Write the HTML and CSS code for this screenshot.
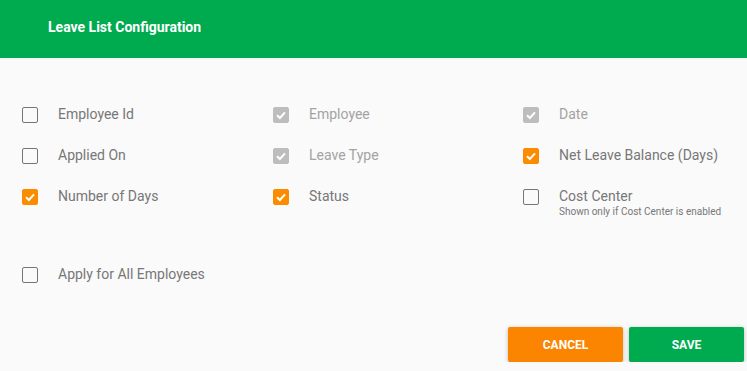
FILE: index.html
```html
<!DOCTYPE html>
<html lang="en">
<head>
    <meta charset="UTF-8">
    <title>Leave List Configuration</title>
    <link rel="stylesheet" href="styles.css">
</head>
<body>
    <!-- Header -->
    <div class="header">
        <h1>Leave List Configuration</h1>
    </div>

    <!-- Column options -->
    <div class="content">
        <div class="options">
            <label class="option">
                <span class="box"></span>
                <span class="label">Employee Id</span>
            </label>
            <label class="option disabled">
                <span class="box checked"><svg viewBox="0 0 16 16"><path d="M4 8.3 L6.9 11 L12 5.4"/></svg></span>
                <span class="label">Employee</span>
            </label>
            <label class="option disabled">
                <span class="box checked"><svg viewBox="0 0 16 16"><path d="M4 8.3 L6.9 11 L12 5.4"/></svg></span>
                <span class="label">Date</span>
            </label>

            <label class="option">
                <span class="box"></span>
                <span class="label">Applied On</span>
            </label>
            <label class="option disabled">
                <span class="box checked"><svg viewBox="0 0 16 16"><path d="M4 8.3 L6.9 11 L12 5.4"/></svg></span>
                <span class="label">Leave Type</span>
            </label>
            <label class="option">
                <span class="box checked"><svg viewBox="0 0 16 16"><path d="M4 8.3 L6.9 11 L12 5.4"/></svg></span>
                <span class="label">Net Leave Balance (Days)</span>
            </label>

            <label class="option">
                <span class="box checked"><svg viewBox="0 0 16 16"><path d="M4 8.3 L6.9 11 L12 5.4"/></svg></span>
                <span class="label">Number of Days</span>
            </label>
            <label class="option">
                <span class="box checked"><svg viewBox="0 0 16 16"><path d="M4 8.3 L6.9 11 L12 5.4"/></svg></span>
                <span class="label">Status</span>
            </label>
            <label class="option">
                <span class="box"></span>
                <span class="label">Cost Center
                    <small>Shown only if Cost Center is enabled</small>
                </span>
            </label>
        </div>

        <label class="option apply-all">
            <span class="box"></span>
            <span class="label">Apply for All Employees</span>
        </label>
    </div>

    <!-- Actions -->
    <div class="actions">
        <button class="btn cancel-btn">Cancel</button>
        <button class="btn save-btn">Save</button>
    </div>
</body>
</html>
```

FILE: styles.css
```css
body {
    margin: 0;
    padding: 0;
    background-color: #fafafa;
    font-family: Roboto, 'Liberation Sans', sans-serif;
    color: #757575;
}
/* Header */
.header {
    height: 58px;
    background-color: #00ab4f;
    display: flex;
    align-items: center;
    padding-left: 48px;
}
.header h1 {
    margin: 0 0 4px;
    font-size: 14px;
    font-weight: 700;
    color: #fff;
}
/* Options */
.content {
    padding: 49px 0 0 22px;
}
.options {
    display: grid;
    grid-template-columns: 251px 250px 224px;
    row-gap: 25px;
    margin-bottom: 49px;
}
.option {
    display: flex;
    align-items: flex-start;
    cursor: pointer;
}
.box {
    width: 16px;
    height: 16px;
    box-sizing: border-box;
    border: 1.5px solid #757575;
    border-radius: 2px;
    flex-shrink: 0;
    display: flex;
}
.box svg {
    width: 16px;
    height: 16px;
    margin: -1.5px;
}
.box path {
    fill: none;
    stroke: #fff;
    stroke-width: 2;
}
.box.checked {
    background-color: #fb8c00;
    border-color: #fb8c00;
}
.disabled .box.checked {
    background-color: #bdbdbd;
    border-color: #bdbdbd;
}
.label {
    margin-left: 20px;
    margin-top: -1px;
    font-size: 14px;
    line-height: 16px;
    color: #777;
}
.disabled .label {
    color: #a3a3a3;
}
.label small {
    display: block;
    font-size: 10px;
    line-height: 12px;
    margin-top: 2px;
}
/* Actions */
.actions {
    display: flex;
    justify-content: flex-end;
    gap: 6px;
    padding-right: 3px;
    margin-top: 44px;
}
.btn {
    width: 115px;
    height: 35px;
    border: none;
    border-radius: 2px;
    color: #fff;
    font-family: Roboto, 'Liberation Sans', sans-serif;
    font-size: 12px;
    font-weight: 700;
    text-transform: uppercase;
    box-shadow: 0 1px 4px rgba(0,0,0,0.25);
    cursor: pointer;
}
.cancel-btn {
    background-color: #fb8500;
}
.save-btn {
    background-color: #00ab4f;
}
```
